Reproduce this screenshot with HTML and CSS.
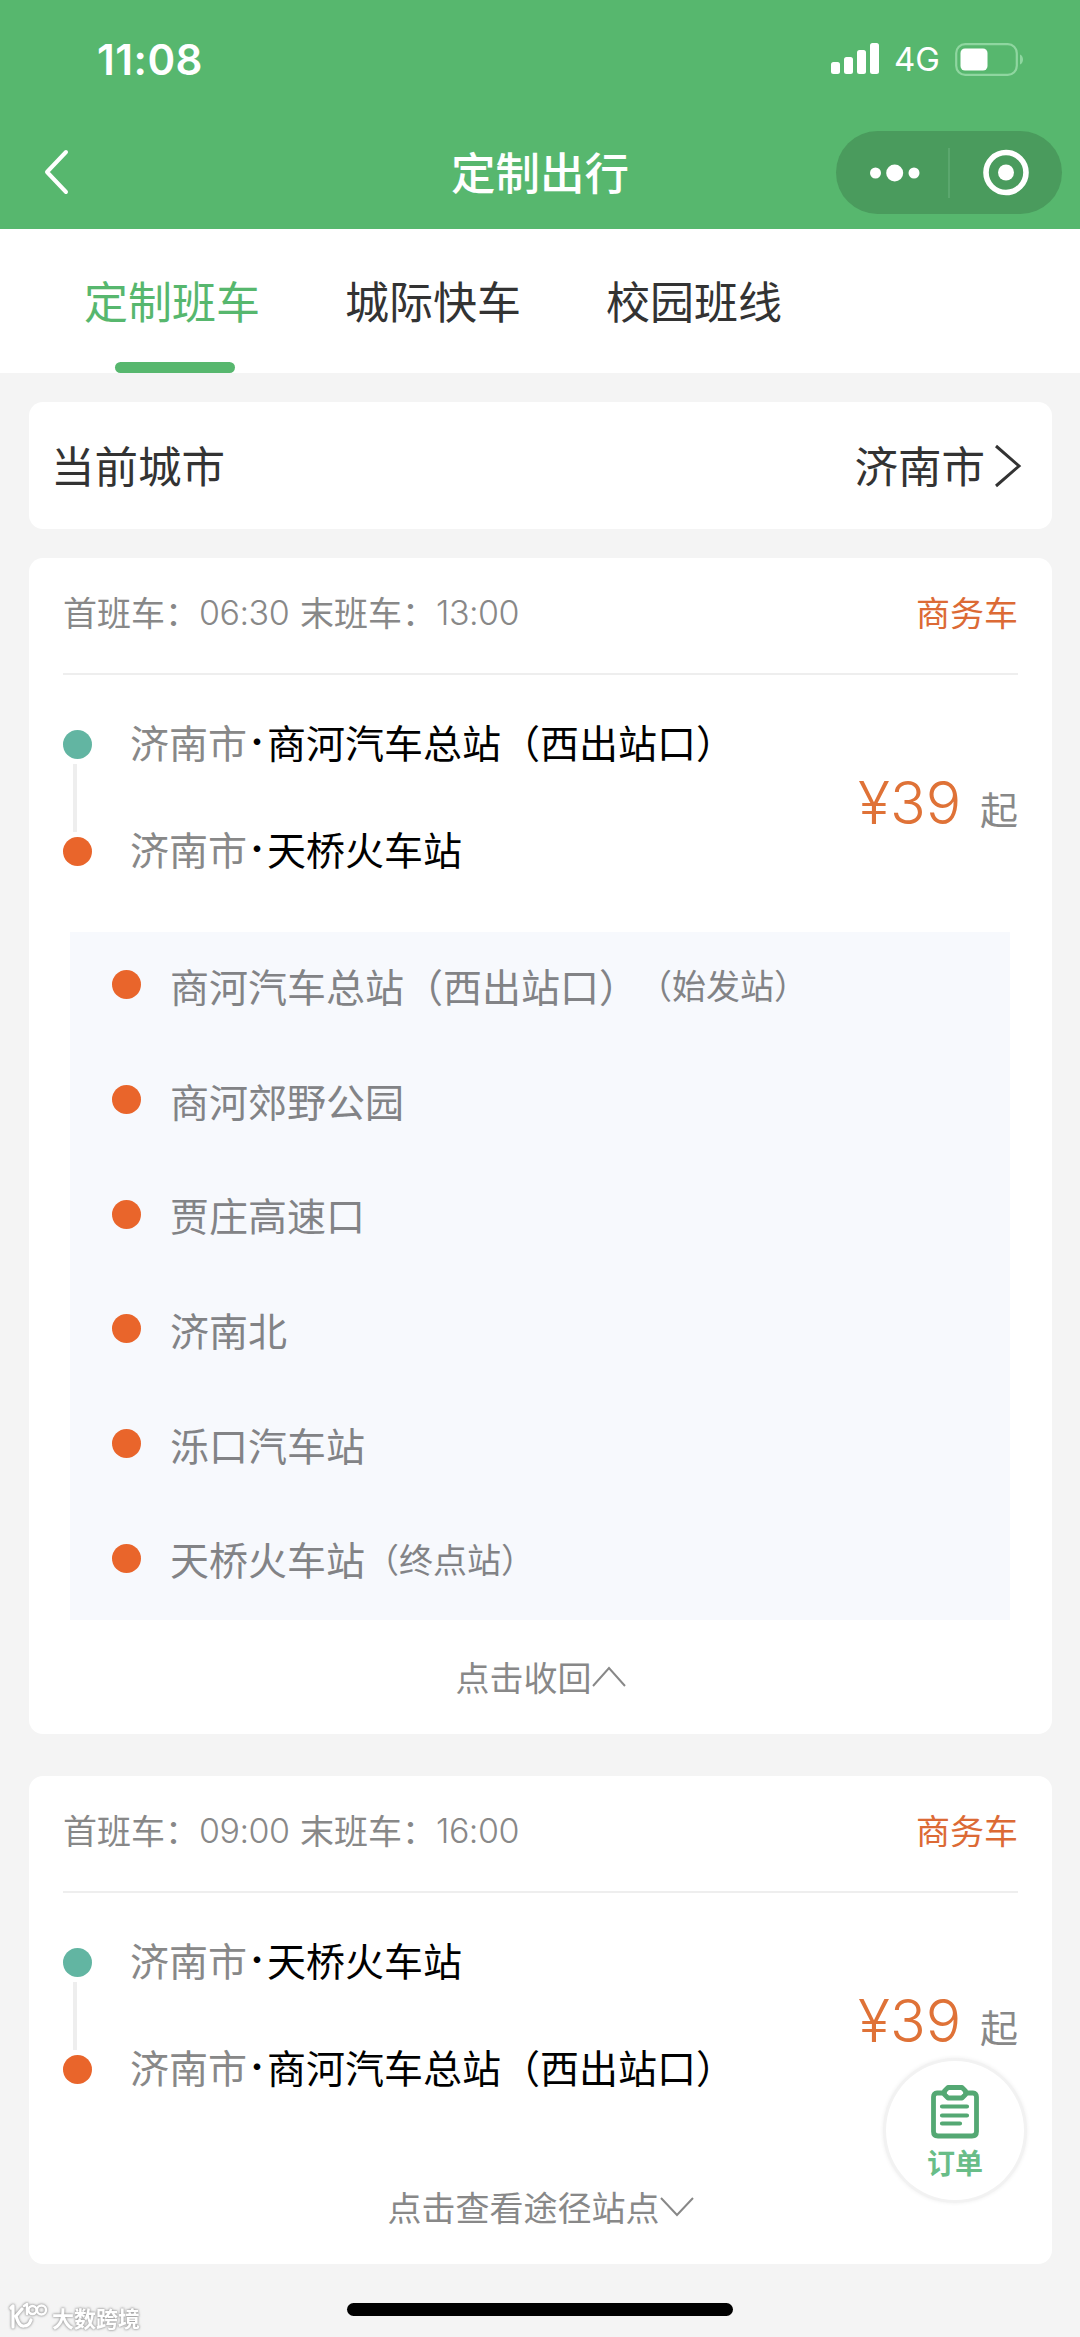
FILE: index.html
```html
<!DOCTYPE html>
<html lang="zh-CN">
<head>
<meta charset="utf-8">
<title>定制出行</title>
<link rel="stylesheet" href="styles.css">
</head>
<body>
<header class="header">
  <div class="status">
    <span class="time">11:08</span>
    <div class="status-icons">
      <svg width="49" height="32" viewBox="0 0 49 32" fill="#fff"><rect x="0" y="19" width="9" height="12" rx="2.5"/><rect x="13" y="14" width="9" height="17" rx="2.5"/><rect x="26" y="7" width="9" height="24" rx="2.5"/><rect x="39" y="0" width="9" height="31" rx="2.5"/></svg>
      <span class="network">4G</span>
      <svg class="battery" width="69" height="33" viewBox="0 0 69 33"><rect x="1.2" y="1.2" width="60.600" height="30.600" rx="9" fill="none" stroke="#8fd6a0" stroke-width="2.2"/><rect x="5.500" y="5.500" width="27" height="22" rx="4.500" fill="#fff"/><path d="M65 11.500c4 1.500 4 8.500 0 10z" fill="#8fd6a0"/></svg>
    </div>
  </div>
  <nav class="nav">
    <svg class="back" width="26" height="46" viewBox="0 0 26 46"><path d="M22 3 3 23 22 43" fill="none" stroke="#fff" stroke-width="4" stroke-linecap="round" stroke-linejoin="round"/></svg>
    <h1 class="title">定制出行</h1>
    <div class="capsule">
      <svg width="226" height="83" viewBox="0 0 226 83"><g fill="#fff"><circle cx="39.500" cy="42" r="5.500"/><circle cx="58.700" cy="42" r="8.500"/><circle cx="78" cy="42" r="5.500"/><circle cx="170" cy="41.500" r="8"/></g><path d="M113 17v50" stroke="#62ab74" stroke-width="1.500"/><circle cx="170" cy="41.500" r="20" fill="none" stroke="#fff" stroke-width="5.600"/></svg>
    </div>
  </nav>
</header>

<div class="tabs">
  <div class="tab active">定制班车</div>
  <div class="tab">城际快车</div>
  <div class="tab">校园班线</div>
</div>

<main class="main">
  <section class="city">
    <span>当前城市</span>
    <span class="city-name">济南市<svg width="28" height="44" viewBox="0 0 28 44"><path d="M2 2 25 22 2 42" fill="none" stroke="#333" stroke-width="3"/></svg></span>
  </section>

  <section class="card">
    <div class="card-head">
      <div class="hours"><span>首班车：</span><span class="clock first">06:30</span><span>末班车：</span><span class="clock">13:00</span></div>
      <span class="kind">商务车</span>
    </div>
    <div class="trip">
      <div class="route">
        <div class="stop"><i class="dot teal"></i><p class="place"><span class="region">济南市</span><span class="mid">·</span><span>商河汽车总站（西出站口）</span></p></div>
        <div class="link"></div>
        <div class="stop"><i class="dot"></i><p class="place"><span class="region">济南市</span><span class="mid">·</span><span>天桥火车站</span></p></div>
      </div>
      <div class="price"><span class="amount">¥39</span><span class="from">起</span></div>
    </div>
    <ul class="stations">
      <li><i class="dot"></i>商河汽车总站（西出站口）<small>（始发站）</small></li>
      <li><i class="dot"></i>商河郊野公园</li>
      <li><i class="dot"></i>贾庄高速口</li>
      <li><i class="dot"></i>济南北</li>
      <li><i class="dot"></i>泺口汽车站</li>
      <li><i class="dot"></i>天桥火车站<small>（终点站）</small></li>
    </ul>
    <div class="toggle">点击收回<svg width="34" height="22" viewBox="0 0 34 22"><path d="M1 21 17 3 33 21" fill="none" stroke="#888" stroke-width="2"/></svg></div>
  </section>

  <section class="card short">
    <div class="card-head">
      <div class="hours"><span>首班车：</span><span class="clock first">09:00</span><span>末班车：</span><span class="clock">16:00</span></div>
      <span class="kind">商务车</span>
    </div>
    <div class="trip">
      <div class="route">
        <div class="stop"><i class="dot teal"></i><p class="place"><span class="region">济南市</span><span class="mid">·</span><span>天桥火车站</span></p></div>
        <div class="link"></div>
        <div class="stop"><i class="dot"></i><p class="place"><span class="region">济南市</span><span class="mid">·</span><span>商河汽车总站（西出站口）</span></p></div>
      </div>
      <div class="price"><span class="amount">¥39</span><span class="from">起</span></div>
    </div>
    <div class="toggle">点击查看途径站点<svg width="34" height="22" viewBox="0 0 34 22"><path d="M1 3 17 20 33 3" fill="none" stroke="#888" stroke-width="2"/></svg></div>
  </section>
</main>

<div class="orders">
  <svg width="48" height="54" viewBox="0 0 48 54" fill="none" stroke="#54a873" stroke-width="4.800" stroke-linecap="round" stroke-linejoin="round"><path d="M13 8H6Q2.500 8 2.500 12V46.500Q2.500 51 7 51H41Q45.500 51 45.500 46.500V12Q45.500 8 42 8H35"/><path d="M17 2.500H31L34.500 6V9.500L31 13H17L13.500 9.500V6Z"/><path d="M11 21.500H36M11 30.500H36M11 38.500H29" stroke-width="4.200"/></svg>
  <span>订单</span>
</div>

<div class="watermark">
  <svg width="40" height="30" viewBox="0 0 40 30" fill="none" stroke="#fff" stroke-linecap="round" stroke-linejoin="round"><path d="M2 6 4 4V25M13 7 7 14Q10 25 15 24Q20 24 22 18" stroke-width="3.200"/><path d="M15 4 18 2V12" stroke-width="2.500"/><circle cx="23.500" cy="8" r="4" stroke-width="2.400"/><circle cx="32.500" cy="8" r="4.500" stroke-width="2.400"/></svg>
  <span>大数跨境</span>
</div>
<div class="home-bar"></div>
</body>
</html>
```
FILE: styles.css
```css
* { box-sizing: border-box; margin: 0; padding: 0; }

body {
  position: relative;
  width: 1080px;
  height: 2337px;
  overflow: hidden;
  background: #f4f4f4;
  color: #333;
  font-family: "Noto Sans CJK SC", sans-serif;
}

svg { display: block; flex: none; }

.header { height: 229px; background: #57b76e; color: #fff; }

.status {
  display: flex;
  justify-content: space-between;
  align-items: center;
  height: 118px;
  padding: 0 56px 0 97px;
  font-family: Inter, sans-serif;
}
.time { font-size: 42px; font-weight: 600; letter-spacing: 0.5px; }
.status-icons { display: flex; align-items: center; }
.network { margin-left: 14px; font-size: 33px; font-weight: 400; line-height: 33px; width: 61px; padding-top: 1px; }

.nav {
  display: grid;
  grid-template-columns: 1fr auto 1fr;
  align-items: center;
  height: 108px;
  padding: 0 18px 0 44px;
}
.title { font-size: 44.500px; font-weight: 500; line-height: 60px; margin-left: -26px; padding-bottom: 2px; }
.capsule { justify-self: end; width: 226px; height: 83px; border-radius: 42px; background: #4a9b5d; }

.tabs { display: flex; gap: 85px; height: 144px; padding-left: 84px; background: #fff; }
.tab {
  position: relative;
  width: 176px;
  font-size: 44px;
  line-height: 142px;
  white-space: nowrap;
}
.tab.active { color: #57b76e; }
.tab.active::after {
  content: "";
  position: absolute;
  left: 31px;
  bottom: 0;
  width: 120px;
  height: 11px;
  border-radius: 6px;
  background: #57b76e;
}

.main { padding: 29px 28px 0 29px; }

.city {
  display: flex;
  justify-content: space-between;
  align-items: center;
  height: 127px;
  margin-bottom: 29px;
  padding: 0 30px 2px 22px;
  border-radius: 14px;
  background: #fff;
  font-size: 43.500px;
}
.city-name { display: flex; align-items: center; gap: 9px; }
.city-name svg { margin-top: 2px; }

.card {
  height: 1176px;
  margin-bottom: 42px;
  padding: 0 34px;
  border-radius: 14px;
  background: #fff;
}
.card.short { height: 488px; }

.card-head {
  display: flex;
  justify-content: space-between;
  height: 117px;
  border-bottom: 2px solid #eee;
  font-size: 34px;
  line-height: 108px;
}
.hours { display: flex; color: #888; }
.clock { padding-top: 1px; font-family: Inter, sans-serif; font-weight: 300; letter-spacing: -0.5px; }
.clock.first { width: 101px; }
.kind { color: #dc6a35; }

.trip { display: flex; justify-content: space-between; height: 257px; padding-top: 47px; }
.stop { display: flex; align-items: center; height: 45px; color: #000; }
.stop .dot { margin-right: 38px; }
.place { display: flex; align-items: center; height: 45px; padding-bottom: 7px; font-size: 39px; line-height: 38px; white-space: nowrap; }
.region { color: #888; }
.mid { width: 20px; text-align: center; font-family: Inter, sans-serif; font-weight: 700; }
.dot { flex: none; width: 29px; height: 29px; border-radius: 50%; background: #e9652b; }
.dot.teal { background: #62b5a2; }
.link { width: 4px; height: 68px; margin: -3px 0 -3px 10px; background: #eee; }

.price { display: flex; align-items: baseline; height: 70px; margin-top: 46px; line-height: 70px; }
.amount { width: 122px; font-family: Inter, sans-serif; font-size: 59px; font-weight: 300; color: #df7237; }
.from { font-size: 38px; color: #888; }

.stations { list-style: none; width: 940px; height: 688px; margin-left: 7px; background: #f7f9fd; }
.stations li {
  display: flex;
  align-items: center;
  height: 114.700px;
  padding: 0 0 9px 42px;
  color: #828386;
  font-size: 39px;
}
.stations .dot { margin-right: 29px; }
.stations small { font-size: 34px; }

.toggle { display: flex; align-items: center; justify-content: center; height: 112px; color: #888; font-size: 34px; }

.orders {
  position: absolute;
  left: 883px;
  top: 2058px;
  display: flex;
  flex-direction: column;
  align-items: center;
  width: 144px;
  height: 145px;
  padding-top: 27px;
  border: 3px solid #f2f2f2;
  border-radius: 50%;
  background: #fff;
  box-shadow: 0 0 4px #eee;
}
.orders svg { margin-top: -3px; }
.orders span { margin-top: 6px; font-size: 28px; font-weight: 700; line-height: 34px; color: #69bd88; }

.watermark {
  position: absolute;
  left: 9px;
  top: 2302px;
  display: flex;
  align-items: center;
  gap: 3px;
  height: 30px;
  color: #fff;
  font-size: 22px;
  font-weight: 700;
  filter: drop-shadow(0 0 1px #999) drop-shadow(0 0 1px #bbb);
}

.home-bar { position: absolute; left: 347px; top: 2303px; width: 386px; height: 13px; border-radius: 7px; background: #000; }
```
